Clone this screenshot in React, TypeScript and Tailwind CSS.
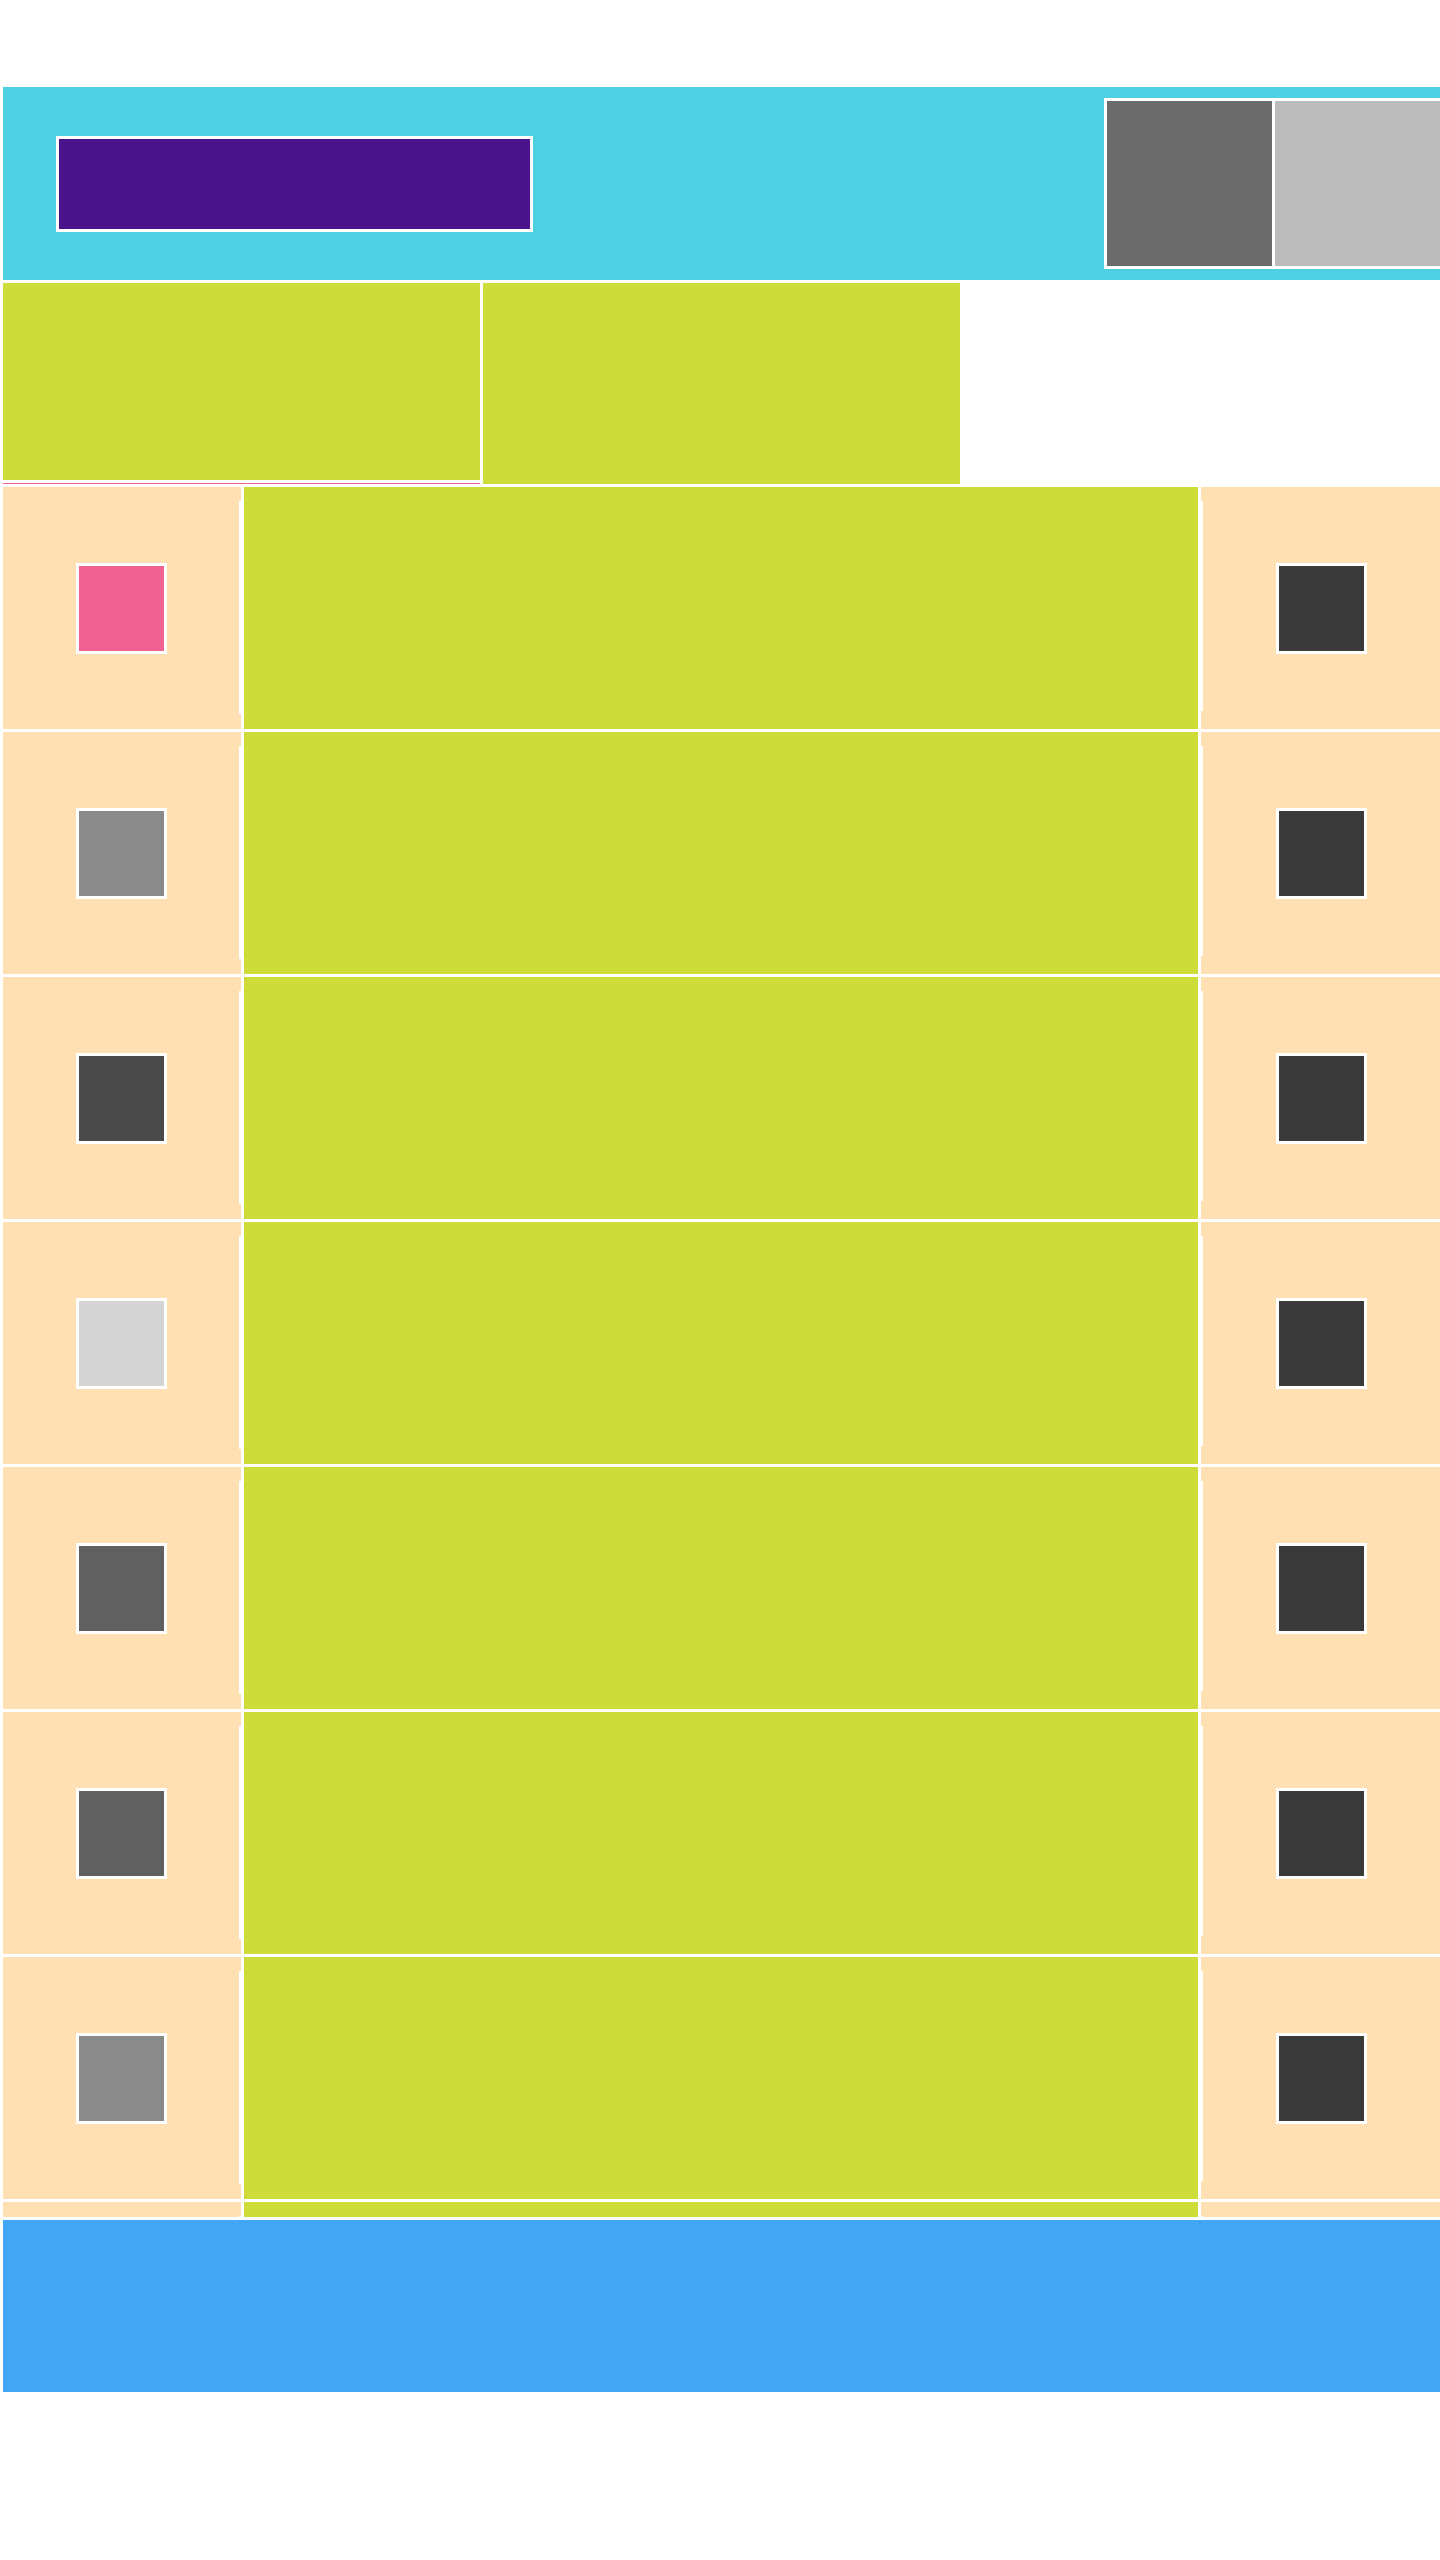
import React from "react";

const leftColors = ["#f06292", "#8a8a8a", "#4a4a4a", "#d4d4d4", "#606060", "#606060", "#8a8a8a", "#8a8a8a"];

function Square({ color }: { color: string }) {
  return (
    <div className="w-[91px] h-[91px] shrink-0 border-[3px] border-white" style={{ backgroundColor: color }} />
  );
}

function Row({ color }: { color: string }) {
  return (
    <div className="flex h-[242px] shrink-0 gap-[3px]">
      <div className="flex w-[238px] shrink-0 bg-[#ffe0b2]">
        <div className="flex flex-1 items-center justify-center">
          <Square color={color} />
        </div>
        <div className="w-[2px] mt-[14px] mb-[15px] bg-white" />
      </div>
      <div className="w-[954px] shrink-0 bg-[#cddc39]" />
      <div className="flex flex-1 bg-[#ffe0b2]">
        <div className="w-[2px] mt-[14px] mb-[18px] bg-white" />
        <div className="flex flex-1 items-center justify-center">
          <Square color="#3a3a3a" />
        </div>
      </div>
    </div>
  );
}

export default function App() {
  return (
    <div className="w-[1440px] min-h-[2560px] bg-white pt-[87px] pl-[3px] overflow-hidden">
      <header className="flex h-[193px] items-center overflow-hidden bg-[#4dd0e1]">
        <div className="ml-[53px] w-[477px] h-[96px] shrink-0 border-[3px] border-white bg-[#4a148c]" />
        <div className="ml-[571px] flex h-[171px] shrink-0 gap-[3px] bg-white p-[3px]">
          <div className="w-[165px] bg-[#6b6b6b]" />
          <div className="w-[165px] bg-[#bbbbbb]" />
        </div>
      </header>
      <div className="mt-[3px] flex gap-[3px]">
        <div className="flex w-[477px] shrink-0 flex-col">
          <div className="h-[197px] bg-[#cddc39]" />
          <div className="mt-[3px] h-px bg-[#f06292]" />
        </div>
        <div className="h-[201px] w-[477px] shrink-0 bg-[#cddc39]" />
      </div>
      <div className="mt-[3px] flex h-[1730px] flex-col gap-[3px] overflow-hidden">
        {leftColors.map((c, i) => (
          <Row key={i} color={c} />
        ))}
      </div>
      <footer className="mt-[3px] h-[172px] bg-[#42a5f5]" />
    </div>
  );
}
